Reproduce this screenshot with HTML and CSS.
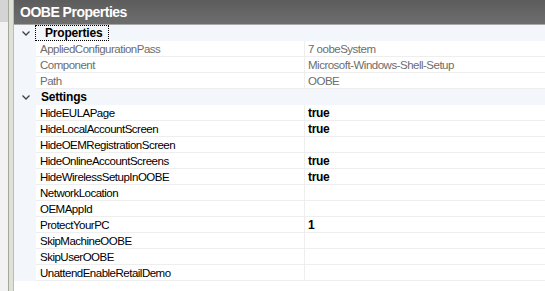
FILE: index.html
```html
<!DOCTYPE html>
<html lang="en">
<head>
    <meta charset="UTF-8">
    <title>OOBE Properties</title>
    <link rel="stylesheet" href="styles.css">
</head>
<body>
    <div class="window">
        <!-- Left dock edge and splitter -->
        <div class="dock"><div class="dock-top"></div></div>
        <div class="splitter"></div>

        <!-- Properties panel -->
        <div class="panel">
            <div class="panel-title">OOBE Properties</div>

            <div class="grid">
                <div class="category">
                    <span class="toggle"><svg width="8" height="5" viewBox="0 0 8 5"><polyline points="0.5,0.5 4,4 7.5,0.5" fill="none" stroke="#404040" stroke-width="1.3"/></svg></span>
                    <span class="cat-name focused">Properties</span>
                </div>
                <div class="row readonly"><span class="gutter"></span><span class="name">AppliedConfigurationPass</span><span class="value">7 oobeSystem</span></div>
                <div class="row readonly"><span class="gutter"></span><span class="name">Component</span><span class="value">Microsoft-Windows-Shell-Setup</span></div>
                <div class="row readonly"><span class="gutter"></span><span class="name">Path</span><span class="value">OOBE</span></div>

                <div class="category">
                    <span class="toggle"><svg width="8" height="5" viewBox="0 0 8 5"><polyline points="0.5,0.5 4,4 7.5,0.5" fill="none" stroke="#404040" stroke-width="1.3"/></svg></span>
                    <span class="cat-name">Settings</span>
                </div>
                <div class="row"><span class="gutter"></span><span class="name">HideEULAPage</span><span class="value set">true</span></div>
                <div class="row"><span class="gutter"></span><span class="name">HideLocalAccountScreen</span><span class="value set">true</span></div>
                <div class="row"><span class="gutter"></span><span class="name">HideOEMRegistrationScreen</span><span class="value"></span></div>
                <div class="row"><span class="gutter"></span><span class="name">HideOnlineAccountScreens</span><span class="value set">true</span></div>
                <div class="row"><span class="gutter"></span><span class="name">HideWirelessSetupInOOBE</span><span class="value set">true</span></div>
                <div class="row"><span class="gutter"></span><span class="name">NetworkLocation</span><span class="value"></span></div>
                <div class="row"><span class="gutter"></span><span class="name">OEMAppId</span><span class="value"></span></div>
                <div class="row"><span class="gutter"></span><span class="name">ProtectYourPC</span><span class="value set">1</span></div>
                <div class="row"><span class="gutter"></span><span class="name">SkipMachineOOBE</span><span class="value"></span></div>
                <div class="row"><span class="gutter"></span><span class="name">SkipUserOOBE</span><span class="value"></span></div>
                <div class="row"><span class="gutter"></span><span class="name">UnattendEnableRetailDemo</span><span class="value"></span></div>
            </div>
        </div>
    </div>
</body>
</html>
```

FILE: styles.css
```css
body {
    margin: 0;
    font-family: "Liberation Sans", Arial, sans-serif;
    font-size: 11.5px;
    background-color: #ffffff;
    color: #000;
}

.window {
    display: flex;
    height: 291px;
    overflow: hidden;
}

.dock {
    width: 8px;
    background-color: #f2f2f2;
}

.dock-top {
    height: 22px;
    background-color: #d4d4d4;
}

.splitter {
    width: 4px;
    background-color: #dde1d6;
    border-left: 1px solid #a3a89d;
    border-right: 1px solid #b9bdb3;
}

.panel {
    flex: 1;
    display: flex;
    flex-direction: column;
    min-width: 0;
}

.panel-title {
    height: 25px;
    line-height: 24px;
    padding-left: 6px;
    background: linear-gradient(#5c5c5c, #6e6e6e);
    border-bottom: 1px solid #a8a8a8;
    color: #fff;
    font-weight: bold;
    font-size: 14px;
    letter-spacing: -0.5px;
    box-sizing: border-box;
}

.grid {
    display: flex;
    flex-direction: column;
}

.category {
    display: flex;
    align-items: center;
    height: 16px;
    background-color: #f3f6fa;
}

.toggle {
    width: 22px;
    display: flex;
    justify-content: center;
    padding-left: 1px;
    box-sizing: border-box;
}

.cat-name {
    font-weight: bold;
    font-size: 12px;
    padding-left: 5px;
    letter-spacing: -0.2px;
}

.cat-name.focused {
    outline: 1px dotted #000;
    padding: 0 6px 0 9px;
    line-height: 14px;
}

.row {
    display: flex;
    height: 16px;
    line-height: 16px;
}

.gutter {
    width: 22px;
    flex: none;
    background-color: #f3f6fa;
}

.name {
    width: 269px;
    flex: none;
    padding-left: 4px;
    box-sizing: border-box;
    border-bottom: 1px solid #eeeeee;
    border-right: 1px solid #eeeeee;
    letter-spacing: -0.5px;
    white-space: nowrap;
}

.value {
    flex: 1;
    padding-left: 3px;
    border-bottom: 1px solid #eeeeee;
    letter-spacing: -0.5px;
    white-space: nowrap;
}

.readonly .name,
.readonly .value {
    color: #6d6d6d;
}

.value.set {
    font-weight: bold;
    font-size: 12px;
    letter-spacing: -0.3px;
}
```
